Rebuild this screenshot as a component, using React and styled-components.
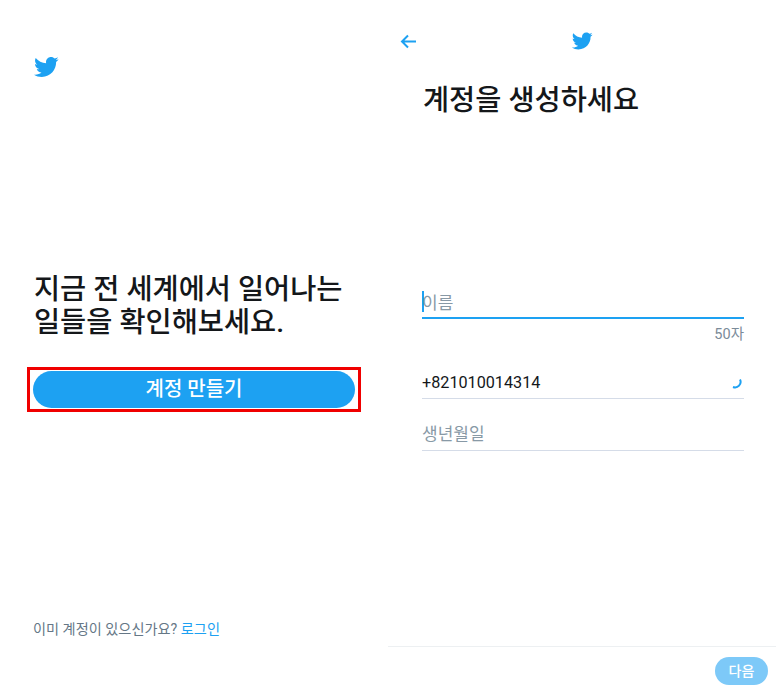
import styled, { createGlobalStyle } from 'styled-components'

const GlobalStyle = createGlobalStyle`
  html, body {
    margin: 0;
    padding: 0;
    background: #fff;
    font-family: Roboto, 'Noto Sans CJK KR', sans-serif;
  }
`

const Page = styled.div`
  display: grid;
  grid-template-columns: 388px 388px;
  width: 776px;
  height: 692px;
  overflow: hidden;
`

const LeftPanel = styled.section`
  display: flex;
  flex-direction: column;
  padding: 54px 0 0 33px;
`

const Headline = styled.h1`
  margin: 193px 0 0 1px;
  font-size: 28.4px;
  line-height: 33px;
  font-weight: 500;
  color: #14171a;
`

const Highlight = styled.div`
  width: 325px;
  height: 38px;
  margin: 28px 0 0 -6px;
  padding: 1px 0 0 3px;
  border: 3px solid #f00000;
  box-sizing: content-box;
`

const PrimaryButton = styled.button`
  display: block;
  width: 322px;
  height: 37px;
  padding: 0;
  border: 0;
  border-radius: 19px;
  background: #1da1f2;
  color: #fff;
  font-family: inherit;
  font-size: 20px;
  font-weight: 500;
  line-height: 37px;
`

const LoginHint = styled.p`
  margin: 207px 0 0;
  font-size: 14.2px;
  line-height: 20px;
  color: #657786;
`

const LoginLink = styled.span`
  color: #1da1f2;
`

const RightPanel = styled.section`
  display: flex;
  flex-direction: column;
`

const TopBar = styled.header`
  display: grid;
  grid-template-columns: 1fr auto 1fr;
  align-items: center;
  height: 20px;
  margin-top: 30px;
  padding: 0 13px 0 12px;
`

const BackIcon = styled.svg`
  width: 17px;
  height: 17px;
  fill: none;
  stroke: #1da1f2;
  stroke-width: 2;
`

const Title = styled.h2`
  margin: 31px 0 0 35px;
  font-size: 28.4px;
  line-height: 40px;
  font-weight: 500;
  color: #14171a;
`

const Form = styled.div`
  display: flex;
  flex: 1;
  flex-direction: column;
  margin: 164px 32px 0 34px;
`

const Field = styled.div`
  display: flex;
  align-items: center;
  justify-content: space-between;
  height: 32px;
  margin-top: ${(p) => p.$top || 0}px;
  border-bottom: ${(p) => (p.$active ? '2px solid #1da1f2' : '1px solid #d5dce8')};
  font-size: 16.2px;
  color: #14171a;
`

const Placeholder = styled.span`
  display: flex;
  align-items: center;
  margin-bottom: ${(p) => p.$lift || 0}px;
  font-size: 17px;
  color: #8899a6;
`

const Caret = styled.i`
  width: 2px;
  height: 21px;
  margin-right: -2px;
  background: #1da1f2;
`

const Counter = styled.div`
  margin-top: 7px;
  font-size: 14.5px;
  line-height: 18px;
  text-align: right;
  color: #7b8b99;
`

const Spinner = styled.svg`
  width: 13px;
  height: 13px;
  margin-right: 2px;
  fill: none;
  stroke: #1da1f2;
  stroke-width: 2;
`

const Footer = styled.footer`
  display: flex;
  justify-content: flex-end;
  height: 35px;
  padding: 10px 8px 0 0;
  border-top: 1px solid #edf0f2;
`

const NextButton = styled.button`
  width: 53px;
  height: 28px;
  padding: 0 0 2px;
  border: 0;
  border-radius: 14px;
  background: #7dc9f8;
  color: #fff;
  font-family: inherit;
  font-size: 14px;
  font-weight: 500;
`

const BirdIcon = styled.svg`
  display: block;
  justify-self: ${(p) => (p.$center ? 'center' : 'start')};
  fill: #1da1f2;
`

const Bird = ({ size, center }) => (
  <BirdIcon width={size} height={size} viewBox="0 0 24 24" $center={center}>
    <path d="M23.643 4.937c-.835.37-1.732.62-2.675.733.962-.576 1.7-1.49 2.048-2.578-.9.534-1.897.922-2.958 1.13-.85-.904-2.06-1.47-3.4-1.47-2.572 0-4.658 2.086-4.658 4.66 0 .364.042.718.12 1.06-3.873-.195-7.304-2.05-9.602-4.868-.4.69-.63 1.49-.63 2.342 0 1.616.823 3.043 2.072 3.878-.764-.025-1.482-.234-2.11-.583v.06c0 2.257 1.605 4.14 3.737 4.568-.392.106-.803.162-1.227.162-.3 0-.593-.028-.877-.082.593 1.85 2.313 3.198 4.352 3.234-1.595 1.25-3.604 1.995-5.786 1.995-.376 0-.747-.022-1.112-.065 2.062 1.323 4.51 2.093 7.14 2.093 8.57 0 13.255-7.098 13.255-13.254 0-.2-.005-.402-.014-.602.91-.658 1.7-1.477 2.323-2.41z" />
  </BirdIcon>
)

const App = () => {
  return (
    <Page>
      <GlobalStyle />
      <LeftPanel>
        <Bird size={26} />
        <Headline>
          지금 전 세계에서 일어나는
          <br />
          일들을 확인해보세요.
        </Headline>
        <Highlight>
          <PrimaryButton>계정 만들기</PrimaryButton>
        </Highlight>
        <LoginHint>
          이미 계정이 있으신가요? <LoginLink>로그인</LoginLink>
        </LoginHint>
      </LeftPanel>
      <RightPanel>
        <TopBar>
          <BackIcon viewBox="0 0 17 17">
            <path d="M16 8.5H2M8 2.5L2 8.5l6 6" />
          </BackIcon>
          <Bird size={22} center />
        </TopBar>
        <Title>계정을 생성하세요</Title>
        <Form>
          <Field $active>
            <Placeholder>
              <Caret />
              이름
            </Placeholder>
          </Field>
          <Counter>50자</Counter>
          <Field $top={22}>
            <span>+821010014314</span>
            <Spinner viewBox="0 0 13 13">
              <path d="M11 3.5a5.5 5.5 0 0 1-7 7.5" />
            </Spinner>
          </Field>
          <Field $top={19}>
            <Placeholder $lift={3}>생년월일</Placeholder>
          </Field>
        </Form>
        <Footer>
          <NextButton>다음</NextButton>
        </Footer>
      </RightPanel>
    </Page>
  )
}

export default App
